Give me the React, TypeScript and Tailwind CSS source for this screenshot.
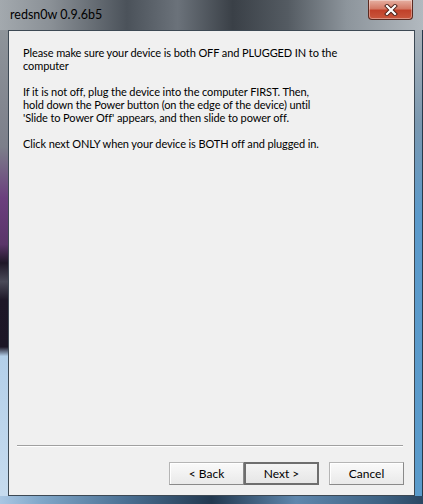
import React from "react";

const font = { fontFamily: 'Lato, "Noto Sans", Arial, sans-serif' };

function Btn({ label, def }: { label: string; def?: boolean }) {
  return (
    <div
      className={
        "w-[75px] h-[23px] flex items-center justify-center text-[12px] text-black " +
        (def
          ? "border-2 border-[#6e6e6e] bg-[linear-gradient(#f4f4f4,#e6e6e6)]"
          : "border border-[#b5b5b5] border-r-[#8a8a8a] border-b-[#8a8a8a] bg-[linear-gradient(#fafafa,#e9e9e9)] shadow-[inset_1px_1px_0_#ffffff]")
      }
    >
      {label}
    </div>
  );
}

export default function App() {
  return (
    <div
      className="w-[423px] h-[504px] flex flex-col overflow-hidden bg-[#8d949b]"
      style={font}
    >
      {/* title bar */}
      <div className="h-[30px] flex items-start justify-between bg-[linear-gradient(90deg,#a3a9ae_0%,#8a9096_12%,#4b525a_30%,#6b727a_42%,#3a4047_55%,#545b62_68%,#8d959c_82%,#b2b9bf_100%)]">
        <div className="pl-[10px] pt-[7px] text-[12.5px] text-black leading-[16px]">redsn0w 0.9.6b5</div>
        <div className="mr-[10px] w-[45px] h-[20px] rounded-b-[4px] border border-t-0 border-[#5b2a20] bg-[linear-gradient(#e6b0a2_0%,#d47a66_45%,#c1412a_55%,#c9573d_100%)] flex items-center justify-center shadow-[inset_0_0_0_1px_rgba(255,255,255,0.35)]">
          <svg width="14" height="12" viewBox="0 0 14 12">
            <path d="M3 2 L11 10 M11 2 L3 10" stroke="#4a2018" strokeWidth="4" strokeLinecap="square" />
            <path d="M3 2 L11 10 M11 2 L3 10" stroke="#ffffff" strokeWidth="2.2" strokeLinecap="square" />
          </svg>
        </div>
      </div>

      {/* middle */}
      <div className="flex-1 flex">
        <div className="w-[8px] bg-[linear-gradient(#8e949a_0%,#7c7f8a_25%,#6b3f7e_36%,#5a3569_46%,#1f1828_50%,#4a4a58_54%,#1d1727_58%,#1c1626_68%,#b3cfe9_70%,#c6dbef_100%)]" />
        <div className="flex-1 flex flex-col bg-[#f0f0f0] border border-[#3d4954]">
          <div className="pl-[14px] pt-[15px] pr-[10px] text-[11px] leading-[13px] tracking-[-0.1px] text-black">
            <p>Please make sure your device is both OFF and PLUGGED IN to the</p>
            <p>computer</p>
            <p className="mt-[13px]">If it is not off, plug the device into the computer FIRST. Then,</p>
            <p>hold down the Power button (on the edge of the device) until</p>
            <p>'Slide to Power Off' appears, and then slide to power off.</p>
            <p className="mt-[13px]">Click next ONLY when your device is BOTH off and plugged in.</p>
          </div>
          <div className="mt-auto ml-[8px] mr-[11px] h-[2px] border-t border-[#a0a0a0] border-b border-b-white" />
          <div className="flex justify-end pr-[10px] pt-[15px] pb-[10px]">
            <Btn label="< Back" />
            <Btn label="Next >" def />
            <div className="w-[10px]" />
            <Btn label="Cancel" />
          </div>
        </div>
        <div className="w-[8px] bg-[linear-gradient(#a9b1b8_0%,#7a98b0_20%,#5b9acb_40%,#5a9bcb_100%)] border-r border-[#26394a]" />
      </div>

      {/* bottom frame */}
      <div className="h-[8px] bg-[linear-gradient(90deg,#a9c6e3_0%,#7fa6c8_10%,#4a6f92_30%,#22384f_50%,#5f87ad_70%,#3e6283_90%,#2b4763_100%)]" />
    </div>
  );
}
